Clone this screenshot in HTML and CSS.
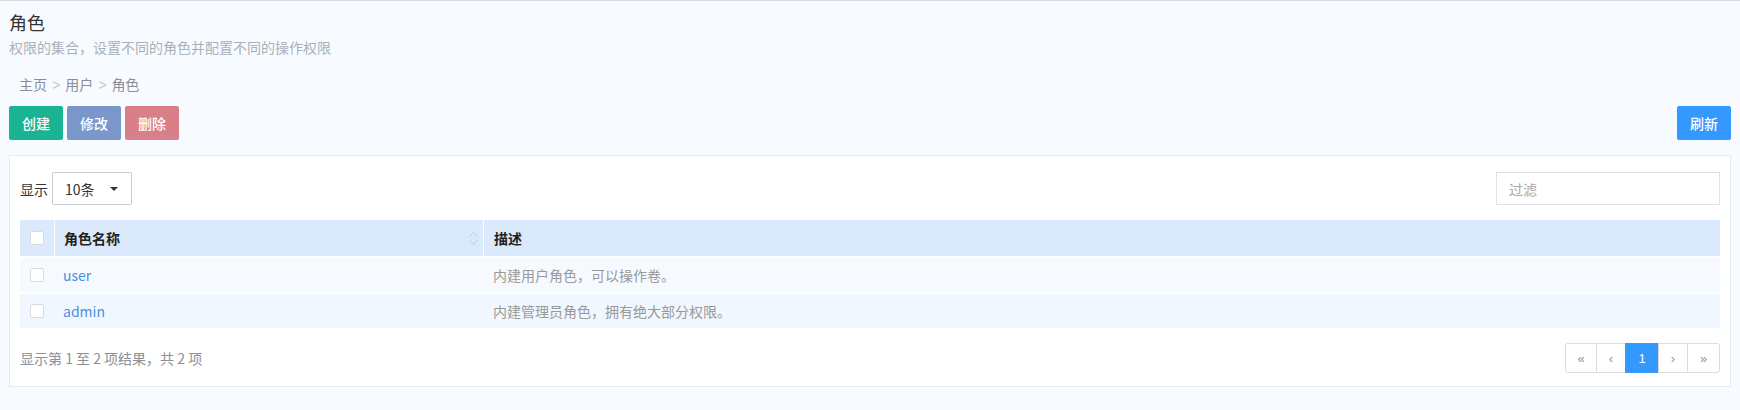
FILE: index.html
```html
<!DOCTYPE html>
<html lang="zh-CN">
<head>
<meta charset="utf-8">
<title>角色</title>
<link rel="stylesheet" href="styles.css">
</head>
<body>
<div class="page">
  <div class="page-head">
    <h1 class="title">角色</h1>
    <div class="subtitle">权限的集合，设置不同的角色并配置不同的操作权限</div>
  </div>
  <div class="breadcrumb">
    <span class="crumb">主页</span><span class="sep">&gt;</span><span class="crumb">用户</span><span class="sep">&gt;</span><span class="crumb">角色</span>
  </div>
  <div class="toolbar">
    <div class="btn-group">
      <button class="btn btn-green">创建</button>
      <button class="btn btn-purple">修改</button>
      <button class="btn btn-pink">删除</button>
    </div>
    <button class="btn btn-blue">刷新</button>
  </div>
  <div class="panel">
    <div class="top-row">
      <div class="length">
        <span class="length-label">显示</span>
        <div class="select"><span>10条</span><span class="caret"></span></div>
      </div>
      <div class="filter"><span class="placeholder">过滤</span></div>
    </div>
    <table class="grid">
      <thead>
        <tr>
          <th class="col-check"><span class="checkbox"></span></th>
          <th class="col-name"><div class="th-inner"><span>角色名称</span>
            <svg class="sort" width="11" height="15" viewBox="0 0 11 15"><path d="M1 6 L5.5 1.5 L10 6" fill="none" stroke="#c9c9c9" stroke-width="1"/><path d="M1 9 L5.5 13.5 L10 9" fill="none" stroke="#c9c9c9" stroke-width="1"/></svg></div></th>
          <th class="col-desc">描述</th>
        </tr>
      </thead>
      <tbody>
        <tr class="odd">
          <td class="col-check"><span class="checkbox"></span></td>
          <td class="col-name"><a class="link">user</a></td>
          <td class="col-desc">内建用户角色，可以操作卷。</td>
        </tr>
        <tr class="even">
          <td class="col-check"><span class="checkbox"></span></td>
          <td class="col-name"><a class="link">admin</a></td>
          <td class="col-desc">内建管理员角色，拥有绝大部分权限。</td>
        </tr>
      </tbody>
    </table>
    <div class="footer">
      <div class="info">显示第 1 至 2 项结果，共 2 项</div>
      <div class="pager">
        <a class="pg first">«</a><a class="pg">‹</a><a class="pg active">1</a><a class="pg">›</a><a class="pg last">»</a>
      </div>
    </div>
  </div>
</div>
</body>
</html>
```

FILE: styles.css
```css
html, body {
  margin: 0;
  padding: 0;
}
body {
  background: #f7fbff;
  border-top: 1px solid #d7dce3;
  font-family: "Noto Sans CJK SC", "Liberation Sans", sans-serif;
  font-size: 14px;
  color: #333;
}
.page {
  padding: 0 9px;
}
.page-head {
  padding-top: 9px;
}
.title {
  margin: 0;
  font-size: 18px;
  line-height: 24px;
  font-weight: normal;
  color: #333;
}
.subtitle {
  margin-top: 4px;
  font-size: 14px;
  line-height: 18px;
  color: #aab1b9;
}
.breadcrumb {
  margin-top: 18px;
  padding-left: 10px;
  line-height: 20px;
  font-size: 14px;
  color: #888e96;
}
.sep {
  color: #c8c8c8;
  margin: 0 5px;
  font-family: "Liberation Sans", sans-serif;
}
.toolbar {
  margin-top: 11px;
  display: flex;
  justify-content: space-between;
  align-items: center;
}
.btn-group {
  display: flex;
  gap: 4px;
}
.btn {
  height: 34px;
  width: 54px;
  border: none;
  border-radius: 2px;
  color: #fff;
  font-family: "Noto Sans CJK SC", sans-serif;
  font-size: 14px;
  font-weight: 500;
  padding: 0;
  cursor: pointer;
}
.btn-green { background: #1ab394; }
.btn-purple { background: #7b96cb; }
.btn-pink { background: #d97f8a; }
.btn-blue { background: #3399ff; }
.panel {
  margin-top: 15px;
  background: #fff;
  border: 1px solid #e6ecf2;
  padding: 16px 10px 13px;
}
.top-row {
  display: flex;
  justify-content: space-between;
  align-items: center;
  height: 33px;
}
.length {
  display: flex;
  align-items: center;
}
.length-label {
  margin-right: 4px;
  color: #333;
}
.select {
  box-sizing: border-box;
  width: 80px;
  height: 33px;
  border: 1px solid #c9ccd1;
  border-radius: 2px;
  display: flex;
  align-items: center;
  justify-content: space-between;
  padding: 0 13px 0 12px;
  color: #333;
}
.caret {
  width: 0;
  height: 0;
  border-left: 4px solid transparent;
  border-right: 4px solid transparent;
  border-top: 4px solid #333;
}
.filter {
  box-sizing: border-box;
  width: 224px;
  height: 33px;
  border: 1px solid #dbe2ea;
  display: flex;
  align-items: center;
  padding-left: 12px;
}
.placeholder {
  color: #a9a9a9;
}
.grid {
  margin-top: 15px;
  width: 100%;
  border-collapse: separate;
  border-spacing: 0;
}
.grid th {
  background: #dae9fb;
  height: 36px;
  box-sizing: border-box;
  text-align: left;
  font-weight: bold;
  color: #222;
  padding: 0;
}
.grid th + th {
  border-left: 1px solid #fff;
}
.grid td {
  height: 36px;
  box-sizing: border-box;
  border-top: 2px solid #fff;
  padding: 0;
  color: #999;
}
.odd td { background: #f6faff; }
.even td { background: #f1f7fe; }
.grid th.col-check, .grid td.col-check {
  width: 34px;
  padding: 0;
  text-align: center;
  line-height: 0;
}
.checkbox {
  display: inline-block;
  vertical-align: middle;
  box-sizing: border-box;
  width: 14px;
  height: 14px;
  border: 1px solid #d8dbe0;
  border-radius: 2px;
  background: #fff;
}
.grid th.col-name, .grid td.col-name {
  width: 429px;
  padding-left: 9px;
}
.th-inner {
  display: flex;
  justify-content: space-between;
  align-items: center;
  padding-right: 4px;
}
.sort {
  display: block;
}
.grid th.col-desc, .grid td.col-desc {
  padding-left: 10px;
}
.link {
  color: #4a8fe4;
  text-decoration: none;
}
.footer {
  margin-top: 15px;
  height: 30px;
  display: flex;
  justify-content: space-between;
  align-items: center;
}
.info {
  color: #8a9099;
}
.pager {
  display: flex;
  height: 30px;
}
.pg {
  box-sizing: border-box;
  height: 30px;
  display: flex;
  align-items: center;
  justify-content: center;
  border: 1px solid #dddddd;
  margin-left: -1px;
  color: #8a94a6;
  font-family: "Liberation Sans", sans-serif;
  font-size: 13px;
  width: 30px;
  background: #fff;
}
.pg.first {
  margin-left: 0;
  width: 32px;
  border-radius: 3px 0 0 3px;
}
.pg.last {
  width: 33px;
  border-radius: 0 3px 3px 0;
}
.pg.active {
  background: #3399ff;
  border-color: #3399ff;
  color: #fff;
  width: 34px;
}
```
